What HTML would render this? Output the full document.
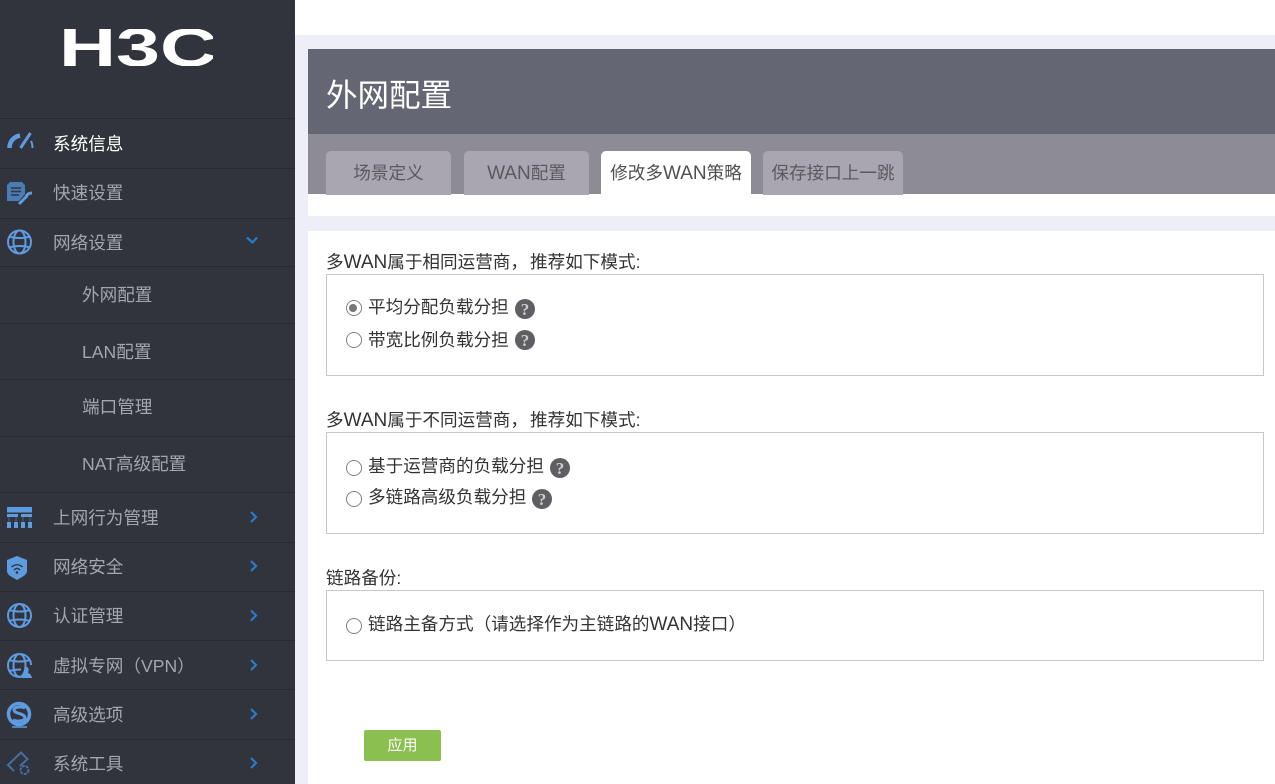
<!DOCTYPE html>
<html lang="zh"><head><meta charset="utf-8"><title>外网配置</title>
<style>
html,body{margin:0;padding:0}
body{width:1275px;height:784px;position:relative;overflow:hidden;background:#eeeef8;font-family:"Liberation Sans","Noto Sans CJK SC",sans-serif;font-size:17.6px;color:#333}
div,svg{position:absolute}
b{font-weight:normal;font-size:19px}
i{font-style:normal;margin-right:2px}
.t{white-space:nowrap;line-height:24px;height:24px}
.n{color:#a3a6aa;left:53px}
.l{position:absolute;left:0;width:295px;height:1px;background:#272a31}
.tab{top:151px;height:44px;background:#a9a6b1;border-radius:5px 5px 0 0;color:#5a5a5e;line-height:44px;text-align:center;white-space:nowrap}
.box{left:326px;width:936px;border:1px solid #c8c8c8}
.q{width:20px;height:20px;border-radius:50%;background:#5f5f63;color:#ccc;font:bold 17px/21px "Liberation Serif",serif;text-align:center}
.r{left:346px;width:14px;height:14px;border:1px solid #808080;border-radius:50%;background:#fff}
</style></head><body>
<div style="left:295px;top:0;width:980px;height:35px;background:#fff"></div>
<div style="left:308px;top:49px;width:967px;height:85px;background:#646673"></div>
<div style="left:308px;top:134px;width:967px;height:60px;background:#8d8b96"></div>
<div style="left:308px;top:194px;width:967px;height:22px;background:#fff"></div>
<div style="left:308px;top:231px;width:967px;height:553px;background:#fff"></div>
<div class="t" style="left:326px;top:75px;font-size:31.500px;line-height:40px;height:40px;color:#fff">外网配置</div>
<div class="tab" style="left:326px;width:125px">场景定义</div>
<div class="tab" style="left:464px;width:125px"><b>WAN</b>配置</div>
<div class="tab" style="left:601px;width:150px;background:#fff;height:43px;color:#4f4f4f">修改多<b>WAN</b>策略</div>
<div class="tab" style="left:763px;width:140px">保存接口上一跳</div>

<div style="left:0;top:0;width:295px;height:784px;background:#31343d"></div>
<svg style="left:63px;top:29px" width="150" height="37" viewBox="0 0 150 37"><text x="-4" y="37" font-family="Liberation Sans" font-weight="bold" font-size="54" fill="#fff" textLength="158" lengthAdjust="spacingAndGlyphs">H3C</text></svg>
<div class="l" style="top:118px"></div><div class="l" style="top:168px"></div><div class="l" style="top:218px"></div><div class="l" style="top:266px"></div><div class="l" style="top:323px"></div><div class="l" style="top:379px"></div><div class="l" style="top:436px"></div><div class="l" style="top:492px"></div><div class="l" style="top:542px"></div><div class="l" style="top:591px"></div><div class="l" style="top:640px"></div><div class="l" style="top:689px"></div><div class="l" style="top:739px"></div>
<div class="t n" style="top:132px;color:#fff">系统信息</div>
<div class="t n" style="top:181px">快速设置</div>
<div class="t n" style="top:231px">网络设置</div>
<div class="t n" style="top:283px;left:82px">外网配置</div>
<div class="t n" style="top:340px;left:82px">LAN配置</div>
<div class="t n" style="top:395px;left:82px">端口管理</div>
<div class="t n" style="top:452px;left:82px">NAT高级配置</div>
<div class="t n" style="top:506px">上网行为管理</div>
<div class="t n" style="top:555px">网络安全</div>
<div class="t n" style="top:604px">认证管理</div>
<div class="t n" style="top:654px">虚拟专网（VPN）</div>
<div class="t n" style="top:703px">高级选项</div>
<div class="t n" style="top:752px">系统工具</div>

<svg style="left:0;top:0" width="295" height="784" viewBox="0 0 295 784" fill="none">
<g stroke="#5e9be0">
<path d="M9.500 148C9.500 142 13 137 20 135.500" stroke-width="4.500"/>
<path d="M20.500 148L30.500 133" stroke-width="3"/>
<path d="M32.500 148C32.500 145 32 143 31 141" stroke-width="2"/>
<g stroke-width="2"><circle cx="19.500" cy="242" r="11.500"/><ellipse cx="19.500" cy="242" rx="6" ry="11.500"/><path d="M9.500 236.500C15 238.500 24 238.500 29.500 236.500M9.500 247.500C15 245.500 24 245.500 29.500 247.500"/></g>
<g stroke-width="2"><circle cx="19.500" cy="615.500" r="11.500"/><ellipse cx="19.500" cy="615.500" rx="6" ry="11.500"/><path d="M9.500 610C15 612 24 612 29.500 610M9.500 621C15 619 24 619 29.500 621"/></g>
<g stroke-width="2"><path d="M22 676.500C13 678 8 672 8 665.500C8 659 13 654 19.500 654C26 654 31 659 31 665"/><ellipse cx="19.500" cy="665.500" rx="6" ry="11.500"/><path d="M9.500 660C15 662 24 662 29.500 660M9.500 671C13 670 17 669.500 21 669.500"/></g>
</g>
<path d="M10 182H22L25 185V194L19 201H7V185Z" fill="#4a7cb5"/>
<path d="M11 188H21M11 191.500H21M11 195H19" stroke="#31343d" stroke-width="1.500"/>
<path d="M19 204L27 196M26 197C27 194 29 193 32 193" stroke="#5e9be0" stroke-width="3"/>
<path d="M7 507H32V512.500H7ZM7 514H18V517H7ZM21 514H32V517H21Z" fill="#5e9be0"/>
<path d="M9 517V522M16 517V522M23 517V522M30 517V522" stroke="#5e9be0" stroke-width="1" opacity=".45"/>
<path d="M7 522H11V528H7ZM14 522H18V528H14ZM21 522H25V528H21ZM28 522H32V528H28Z" fill="#5e9be0"/>
<path d="M7 560L17 556L27 560V571C27 575 22 577 17 580C12 577 7 575 7 571Z" fill="#5e9be0"/>
<path d="M11.500 567C15 564 19 564 22.500 567M14 570C16 568 18 568 20 570" stroke="#31343d" stroke-width="1.300"/>
<circle cx="17" cy="572.500" r="1.300" fill="#31343d"/>
<path d="M22 678V675C23 673 25 673 25 673C24 671 24 667 26.500 667C29 667 29 671 28 673C29 673 31 674 32 678Z" fill="#5e9be0"/>
<circle cx="19" cy="714" r="10.500" stroke="#5e9be0" stroke-width="3.500"/>
<path d="M25 708C21 706 14 707 14 710C14 714 25 713 25 718C25 721 17 722 13 720" stroke="#5e9be0" stroke-width="3"/>
<path d="M12 727H27" stroke="#5e9be0" stroke-width="1.500"/>
<path d="M14 771L8 765L21 752.500L27.500 759L20 766" stroke="#44709f" stroke-width="2"/>
<circle cx="24.500" cy="770" r="4" stroke="#44709f" stroke-width="2" stroke-dasharray="3 1"/>
<g stroke="#2a7bc8" stroke-width="2.200">
<path d="M247 237.500L252.500 242.500L257 237.500"/>
<path d="M251 512L256 517L251 522"/>
<path d="M251 561L256 566L251 571"/>
<path d="M251 610.500L256 615.500L251 620.500"/>
<path d="M251 660L256 665L251 670"/>
<path d="M251 709L256 714L251 719"/>
<path d="M251 758L256 763L251 768"/>
</g>
</svg>

<div class="t" style="left:326px;top:250px"><i>多<b>WAN</b>属于相同运营商，</i>推荐如下模式:</div>
<div class="box" style="top:274px;height:100px"></div>
<div class="r" style="top:300px"></div><div style="left:349px;top:304px;width:8px;height:8px;border-radius:50%;background:#777"></div>
<div class="t" style="left:368px;top:295px">平均分配负载分担</div><div class="q" style="left:515px;top:299px">?</div>
<div class="r" style="top:332px"></div>
<div class="t" style="left:368px;top:328px">带宽比例负载分担</div><div class="q" style="left:515px;top:330px">?</div>

<div class="t" style="left:326px;top:408px"><i>多<b>WAN</b>属于不同运营商，</i>推荐如下模式:</div>
<div class="box" style="top:432px;height:100px"></div>
<div class="r" style="top:460px"></div>
<div class="t" style="left:368px;top:454px">基于运营商的负载分担</div><div class="q" style="left:550px;top:458px">?</div>
<div class="r" style="top:491px"></div>
<div class="t" style="left:368px;top:485px">多链路高级负载分担</div><div class="q" style="left:532px;top:489px">?</div>

<div class="t" style="left:326px;top:566px">链路备份:</div>
<div class="box" style="top:590px;height:69px"></div>
<div class="r" style="top:618px"></div>
<div class="t" style="left:368px;top:612px">链路主备方式（请选择作为主链路的<b>WAN</b>接口）</div>

<div style="left:364px;top:730px;width:77px;height:31px;background:#8bbf4f;border-radius:2px;color:#fff;font-size:15px;line-height:31px;text-align:center">应用</div>
</body></html>
